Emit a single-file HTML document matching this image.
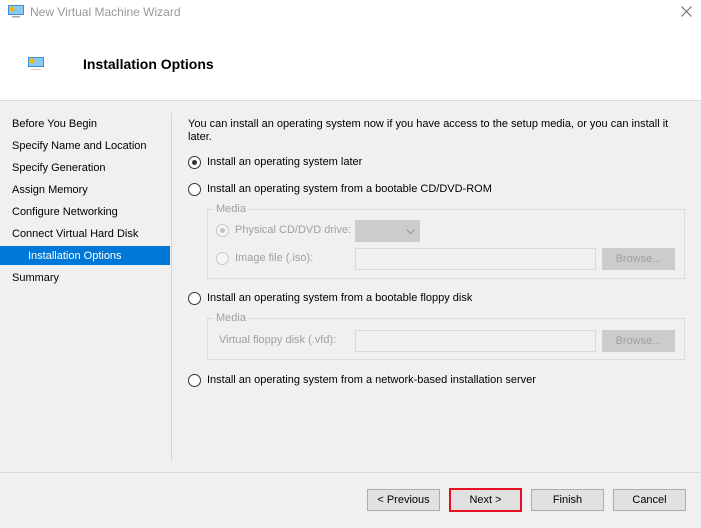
<!DOCTYPE html>
<html><head><style>
*{margin:0;padding:0;box-sizing:border-box}
body{width:701px;height:528px;background:#f0f0f0;font-family:"Liberation Sans",sans-serif;font-size:11px;color:#000;position:relative;overflow:hidden}
.a{position:absolute;white-space:nowrap}
.g{color:#a0a0a0}
.rad{position:absolute;width:13px;height:13px;border:1px solid #333;border-radius:50%;background:#fff}
.rad.d{border-color:#c8c8c8;background:#f5f5f5}
.btn{position:absolute;height:22px;width:73px;border:1px solid #adadad;background:#e1e1e1;text-align:center;line-height:20px;font-size:11px}
.gb{position:absolute;height:22px;border:1px solid #d9d9d9;background:#ececec}
.box{position:absolute;border:1px solid #dcdcdc}
</style></head><body>
<div class="a" style="left:0;top:0;width:701px;height:101px;background:#fff;border-bottom:1px solid #dadada"></div>
<svg class="a" style="left:8px;top:5px" width="16" height="14"><rect x="0" y="0" width="16" height="10" fill="#3c8fd6"/><rect x="1" y="1" width="14" height="8" fill="#8cc8f0"/><circle cx="4" cy="4" r="2.5" fill="#f5b800"/><rect x="4" y="11" width="8" height="1.5" fill="#9ab"/></svg>
<div class="a" style="left:30px;top:5px;font-size:12px;color:#999">New Virtual Machine Wizard</div>
<svg class="a" style="left:681px;top:6px" width="11" height="11"><path d="M0.5 0.5L10.5 10.5M10.5 0.5L0.5 10.5" stroke="#666" stroke-width="1"/></svg>
<svg class="a" style="left:28px;top:57px" width="16" height="14"><rect x="0" y="0" width="16" height="10" fill="#3c8fd6"/><rect x="1" y="1" width="14" height="8" fill="#8cc8f0"/><circle cx="4" cy="4" r="2.5" fill="#f5b800"/><rect x="3" y="12" width="10" height="1" fill="#ccc"/></svg>
<div class="a" style="left:83px;top:56px;font-size:14px;font-weight:bold">Installation Options</div>

<div class="a" style="left:171px;top:113px;width:1px;height:348px;background:#d6d6d6"></div>
<div class="a" style="left:12px;top:118px">Before You Begin</div>
<div class="a" style="left:12px;top:140px">Specify Name and Location</div>
<div class="a" style="left:12px;top:162px">Specify Generation</div>
<div class="a" style="left:12px;top:184px">Assign Memory</div>
<div class="a" style="left:12px;top:206px">Configure Networking</div>
<div class="a" style="left:12px;top:228px">Connect Virtual Hard Disk</div>
<div class="a" style="left:0;top:246px;width:170px;height:19px;background:#0078d7"></div>
<div class="a" style="left:28px;top:250px;color:#fff">Installation Options</div>
<div class="a" style="left:12px;top:272px">Summary</div>

<div class="a" style="left:188px;top:118px;line-height:13px">You can install an operating system now if you have access to the setup media, or you can install it<br>later.</div>
<div class="rad" style="left:188px;top:156px"><div style="width:5px;height:5px;border-radius:50%;background:#333;margin:3px"></div></div>
<div class="a" style="left:207px;top:156px">Install an operating system later</div>
<div class="rad" style="left:188px;top:183px"></div>
<div class="a" style="left:207px;top:183px">Install an operating system from a bootable CD/DVD-ROM</div>
<div class="box" style="left:207px;top:209px;width:478px;height:70px"></div>
<div class="a g" style="left:214px;top:203px;background:#f0f0f0;padding:0 2px">Media</div>
<div class="rad d" style="left:216px;top:224px"><div style="width:5px;height:5px;border-radius:50%;background:#c0c0c0;margin:3px"></div></div>
<div class="a g" style="left:235px;top:224px">Physical CD/DVD drive:</div>
<div class="gb" style="left:355px;top:220px;width:65px;background:#ccc;border-color:#ccc"><svg class="a" style="left:50px;top:8px" width="9" height="5"><path d="M0.5 0.5L4.5 4.5L8.5 0.5" stroke="#999" fill="none"/></svg></div>
<div class="rad d" style="left:216px;top:252px"></div>
<div class="a g" style="left:235px;top:252px">Image file (.iso):</div>
<div class="gb" style="left:355px;top:248px;width:241px;background:#f0f0f0"></div>
<div class="gb g" style="left:602px;top:248px;width:73px;background:#ccc;border-color:#ccc;text-align:center;line-height:20px">Browse...</div>

<div class="rad" style="left:188px;top:292px"></div>
<div class="a" style="left:207px;top:292px">Install an operating system from a bootable floppy disk</div>
<div class="box" style="left:207px;top:318px;width:478px;height:42px"></div>
<div class="a g" style="left:214px;top:312px;background:#f0f0f0;padding:0 2px">Media</div>
<div class="a g" style="left:219px;top:334px">Virtual floppy disk (.vfd):</div>
<div class="gb" style="left:355px;top:330px;width:241px;background:#f0f0f0"></div>
<div class="gb g" style="left:602px;top:330px;width:73px;background:#ccc;border-color:#ccc;text-align:center;line-height:20px">Browse...</div>

<div class="rad" style="left:188px;top:374px"></div>
<div class="a" style="left:207px;top:374px">Install an operating system from a network-based installation server</div>

<div class="a" style="left:0;top:472px;width:701px;height:1px;background:#d8d8d8"></div>
<div class="btn" style="left:367px;top:489px">&lt; Previous</div>
<div class="btn" style="left:449px;top:488px;border:2px solid #e81123;height:24px;line-height:20px">Next &gt;</div>
<div class="btn" style="left:531px;top:489px">Finish</div>
<div class="btn" style="left:613px;top:489px">Cancel</div>
</body></html>
